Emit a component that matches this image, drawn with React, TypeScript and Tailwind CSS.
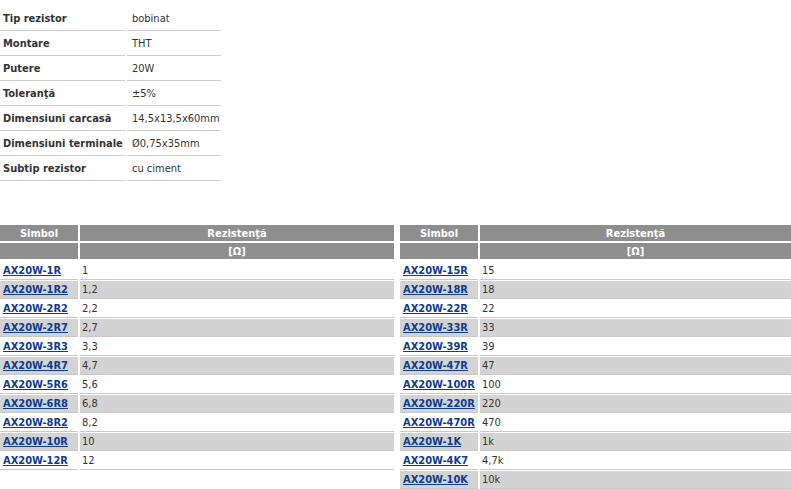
import React from "react";

const specs: [string, string][] = [
  ["Tip rezistor", "bobinat"],
  ["Montare", "THT"],
  ["Putere", "20W"],
  ["Toleranţă", "±5%"],
  ["Dimensiuni carcasă", "14,5x13,5x60mm"],
  ["Dimensiuni terminale", "Ø0,75x35mm"],
  ["Subtip rezistor", "cu ciment"],
];

const left: [string, string][] = [
  ["AX20W-1R", "1"],
  ["AX20W-1R2", "1,2"],
  ["AX20W-2R2", "2,2"],
  ["AX20W-2R7", "2,7"],
  ["AX20W-3R3", "3,3"],
  ["AX20W-4R7", "4,7"],
  ["AX20W-5R6", "5,6"],
  ["AX20W-6R8", "6,8"],
  ["AX20W-8R2", "8,2"],
  ["AX20W-10R", "10"],
  ["AX20W-12R", "12"],
];

const right: [string, string][] = [
  ["AX20W-15R", "15"],
  ["AX20W-18R", "18"],
  ["AX20W-22R", "22"],
  ["AX20W-33R", "33"],
  ["AX20W-39R", "39"],
  ["AX20W-47R", "47"],
  ["AX20W-100R", "100"],
  ["AX20W-220R", "220"],
  ["AX20W-470R", "470"],
  ["AX20W-1K", "1k"],
  ["AX20W-4K7", "4,7k"],
  ["AX20W-10K", "10k"],
];

function ResTable({ rows, width }: { rows: [string, string][]; width: string }) {
  return (
    <div className={`flex flex-col ${width}`}>
      <div className="flex gap-[2px] h-[16px]">
        <div className="w-[78px] shrink-0 bg-[#8e8e8e] text-white font-bold flex items-center justify-center">Simbol</div>
        <div className="flex-1 bg-[#8e8e8e] text-white font-bold flex items-center justify-center">Rezistenţă</div>
      </div>
      <div className="flex gap-[2px] h-[16px] mt-[2px]">
        <div className="w-[78px] shrink-0 bg-[#8e8e8e]"></div>
        <div className="flex-1 bg-[#8e8e8e] text-white font-bold flex items-center justify-center">[Ω]</div>
      </div>
      <div className="flex flex-col gap-[1px] mt-[3px]">
        {rows.map(([s, v], i) => (
          <div key={s} className="flex gap-[2px] h-[18px]">
            <div className={`w-[78px] shrink-0 border-b border-[#c8c8c8] pl-[3px] flex items-center ${i % 2 ? "bg-[#d3d3d3]" : "bg-white"}`}>
              <a href="#" className="font-bold text-[#0d3b8e] underline">{s}</a>
            </div>
            <div className={`flex-1 border-b border-[#c8c8c8] pl-[2px] flex items-center ${i % 2 ? "bg-[#d3d3d3]" : "bg-white"}`}>
              {v}
            </div>
          </div>
        ))}
      </div>
    </div>
  );
}

export default function App() {
  return (
    <div
      className="w-[791px] h-[489px] bg-white text-[#333] text-[11px] leading-[13px] overflow-hidden"
      style={{ fontFamily: '"DejaVu Sans Condensed", "DejaVu Sans", sans-serif' }}
    >
      <div className="pt-[6px] flex flex-col w-[221px]">
        {specs.map(([k, v]) => (
          <div key={k} className="flex gap-[2px] h-[25px]">
            <div className="w-[125px] shrink-0 border-b border-[#cccccc] pl-[3px] flex items-center font-bold">{k}</div>
            <div className="flex-1 border-b border-[#cccccc] pl-[5px] flex items-center">{v}</div>
          </div>
        ))}
      </div>
      <div className="mt-[44px] flex gap-[6px]">
        <ResTable rows={left} width="w-[394px]" />
        <ResTable rows={right} width="flex-1" />
      </div>
    </div>
  );
}
